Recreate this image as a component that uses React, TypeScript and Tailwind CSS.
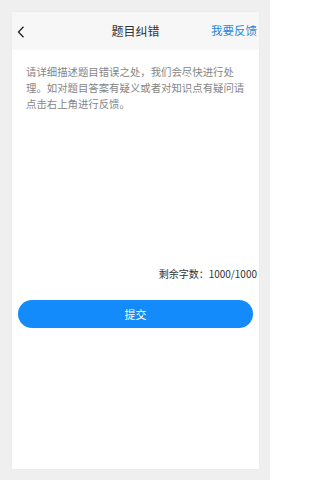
import React from "react";

const font = { fontFamily: '"Noto Sans CJK SC", "Liberation Sans", sans-serif' };

const App = () => {
  return (
    <div
      className="h-[480px] w-[270px] bg-[#efefef] pt-3 pb-[11px] pl-3 pr-[11px]"
      style={font}
    >
      <div className="flex h-full flex-col bg-white shadow-[0_0_2px_rgba(0,0,0,0.04)]">
        <div className="relative flex h-[38px] items-center justify-center bg-[#f7f7f7]">
          <svg
            className="absolute left-[5px] top-[14px]"
            width="8"
            height="12"
            viewBox="0 0 8 12"
            fill="none"
          >
            <path d="M6.5 0.8 L1.5 6 L6.5 11.2" stroke="#222" strokeWidth="1.3" />
          </svg>
          <span className="text-[12px] text-[#333]">题目纠错</span>
          <span className="absolute right-[2px] text-[11.5px] text-[#2a88e0]">
            我要反馈
          </span>
        </div>
        <div className="mx-[2px] h-[215px] px-3 pt-[14px]">
          <p className="text-[10.4px] leading-[16px] text-[#858585]">
            请详细描述题目错误之处，我们会尽快进行处理。如对题目答案有疑义或者对知识点有疑问请点击右上角进行反馈。
          </p>
        </div>
        <div className="flex h-4 items-center justify-end pr-[2px] text-[10px] text-[#333]">
          剩余字数：1000/1000
        </div>
        <button className="mx-[6px] mt-[19px] flex h-[28px] items-center justify-center rounded-full bg-[#138bfb] text-[11px] text-white">
          提交
        </button>
      </div>
    </div>
  );
};

export default App;
